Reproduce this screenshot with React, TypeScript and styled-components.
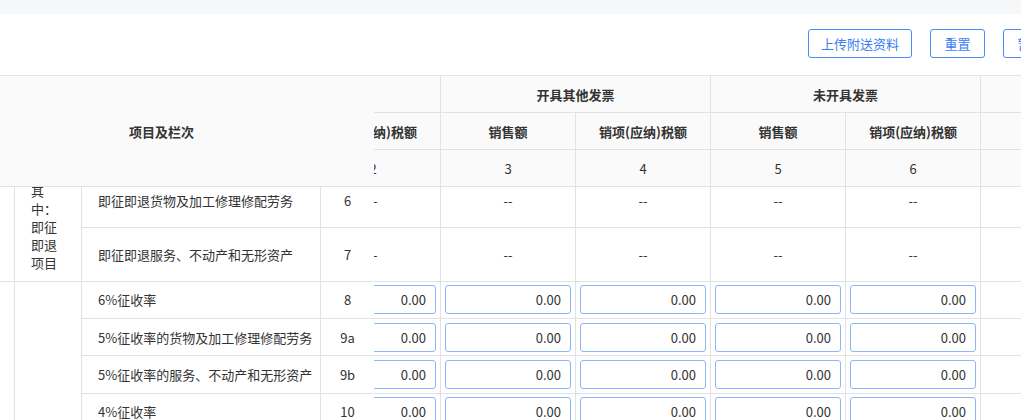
import React from 'react';
import styled, { createGlobalStyle } from 'styled-components';

const GlobalStyle = createGlobalStyle`
  html, body {
    margin: 0;
    padding: 0;
    background: #fff;
  }
  body {
    overflow: hidden;
    font-family: "Noto Sans CJK SC", "Noto Sans", sans-serif;
    font-size: 13px;
    color: #333;
  }
  * {
    box-sizing: border-box;
  }
`;

// the window is narrower than the form, and is scrolled a bit to the right
const PAGE_SCROLL_X = 52;
// the table body is scrolled sideways and down under its fixed header / fixed columns
const TABLE_SCROLL_X = 204;
const TABLE_SCROLL_Y = 201;

const FIXED_COLS = [66, 67, 239, 54];
const FIXED_WIDTH = FIXED_COLS.reduce((a, b) => a + b, 0);
const DATA_COL = 135;

type SubCol = { title: string; no: string };
type Group = { title: string; cols: SubCol[]; locked?: boolean };

const GROUPS: Group[] = [
  { title: '开具增值税专用发票', cols: [{ title: '销售额', no: '1' }, { title: '销项(应纳)税额', no: '2' }] },
  { title: '开具其他发票', cols: [{ title: '销售额', no: '3' }, { title: '销项(应纳)税额', no: '4' }] },
  { title: '未开具发票', cols: [{ title: '销售额', no: '5' }, { title: '销项(应纳)税额', no: '6' }] },
  {
    title: '纳税检查调整',
    cols: [{ title: '销售额', no: '7' }, { title: '销项(应纳)税额', no: '8' }],
    locked: true,
  },
];
const DATA_COLS = GROUPS.flatMap((g) => g.cols.map((c) => ({ ...c, locked: !!g.locked })));

type Line = { no: string; name: string; dash?: boolean; tall?: boolean };
type Part = { label: string; lines: Line[] };
type Section = { title: string; parts: Part[] };

const SECTIONS: Section[] = [
  {
    title: '一、一般计税方法计税',
    parts: [
      {
        label: '全部征税项目',
        lines: [
          { no: '1', name: '13%税率的货物及加工修理修配劳务' },
          { no: '2', name: '13%税率的服务、不动产和无形资产' },
          { no: '3', name: '9%税率的货物及加工修理修配劳务' },
          { no: '4', name: '9%税率的服务、不动产和无形资产' },
          { no: '5', name: '6%税率' },
        ],
      },
      {
        label: '其中：即征即退项目',
        lines: [
          { no: '6', name: '即征即退货物及加工修理修配劳务', dash: true, tall: true },
          { no: '7', name: '即征即退服务、不动产和无形资产', dash: true, tall: true },
        ],
      },
    ],
  },
  {
    title: '二、简易计税方法计税',
    parts: [
      {
        label: '全部征税项目',
        lines: [
          { no: '8', name: '6%征收率' },
          { no: '9a', name: '5%征收率的货物及加工修理修配劳务' },
          { no: '9b', name: '5%征收率的服务、不动产和无形资产' },
          { no: '10', name: '4%征收率' },
          { no: '11', name: '3%征收率的货物及加工修理修配劳务' },
          { no: '12', name: '3%征收率的服务、不动产和无形资产' },
          { no: '13a', name: '预征率 %' },
          { no: '13b', name: '预征率 %' },
          { no: '13c', name: '预征率 %' },
        ],
      },
      {
        label: '其中：即征即退项目',
        lines: [
          { no: '14', name: '即征即退货物及加工修理修配劳务', dash: true, tall: true },
          { no: '15', name: '即征即退服务、不动产和无形资产', dash: true, tall: true },
        ],
      },
    ],
  },
];

const Screen = styled.div`
  width: 100vw;
  height: 420px;
  overflow: hidden;
  padding-top: 14px;
  background: #f5f7f9;
`;

const Page = styled.div<{ $scroll: number }>`
  width: 1198px;
  height: 406px;
  margin-left: ${(p) => -p.$scroll}px;
  background: #fff;
  display: flex;
  flex-direction: column;
`;

const Toolbar = styled.div`
  height: 61px;
  flex: none;
  display: flex;
  justify-content: flex-end;
  align-items: flex-start;
  gap: 18px;
  padding: 15px 15px 0 0;
`;

const Button = styled.button`
  height: 29px;
  min-width: 55px;
  padding: 0 12px;
  border: 1px solid #4d8cf5;
  border-radius: 3px;
  background: #fff;
  color: #3b7cf2;
  font-family: inherit;
  font-size: 13px;
  cursor: pointer;
`;

const TableBox = styled.div`
  position: relative;
  flex: 1;
  overflow: hidden;
`;

const FixedLayer = styled.div`
  position: absolute;
  top: 0;
  left: 0;
  bottom: 0;
  width: ${FIXED_WIDTH}px;
  z-index: 2;
  background: #fff;
`;

const HeadWrap = styled.div`
  overflow: hidden;
`;

const BodyWrap = styled.div`
  overflow: hidden;
  height: 240px;
`;

const Grid = styled.table<{ $width: number; $dx?: number; $dy?: number }>`
  table-layout: fixed;
  border-collapse: collapse;
  width: ${(p) => p.$width}px;
  margin-left: ${(p) => -(p.$dx ?? 0)}px;
  margin-top: ${(p) => -(p.$dy ?? 0)}px;
`;

const Col = styled.col<{ $w: number }>`
  width: ${(p) => p.$w}px;
`;

const HeadRow = styled.tr`
  height: 37px;
`;

const HeadCell = styled.th<{ $light?: boolean }>`
  padding: 0 8px;
  background: #fafafa;
  border: 1px solid #e2e2e2;
  font-weight: ${(p) => (p.$light ? 400 : 700)};
  font-size: 13px;
  color: #333;
  text-align: center;
  white-space: nowrap;
`;

const BodyRow = styled.tr<{ $tall?: boolean }>`
  height: ${(p) => (p.$tall ? 54 : 37.33)}px;
`;

const Cell = styled.td`
  border: 1px solid #e2e2e2;
  background: #fff;
  padding: 0;
  font-size: 13px;
  color: #333;
`;

const SectionCell = styled(Cell)`
  padding: 0 8px;
  text-align: center;
  line-height: 18px;
`;

const PartCell = styled(Cell)`
  padding: 0 16px;
  text-align: left;
  line-height: 18px;
  word-break: break-all;
`;

const NameCell = styled(Cell)`
  padding: 0 16px;
  text-align: left;
  white-space: nowrap;
`;

const NoCell = styled(Cell)`
  text-align: center;
`;

const DashCell = styled(Cell)`
  text-align: center;
`;

const InputCell = styled(Cell)`
  padding: 0 4px;
`;

const Amount = styled.input`
  display: block;
  width: 100%;
  height: 29px;
  padding: 0 9px;
  border: 1px solid #8db7f8;
  border-radius: 3px;
  background: #fff;
  text-align: right;
  font-family: inherit;
  font-size: 13px;
  color: #333;
  outline: none;
`;

const allLines = SECTIONS.flatMap((s) => s.parts.flatMap((p) => p.lines));

function DataCols() {
  return (
    <colgroup>
      <Col $w={FIXED_WIDTH} />
      {DATA_COLS.map((c) => (
        <Col key={c.no} $w={DATA_COL} />
      ))}
    </colgroup>
  );
}

function FixedCols() {
  return (
    <colgroup>
      {FIXED_COLS.map((w, i) => (
        <Col key={i} $w={w} />
      ))}
    </colgroup>
  );
}

function ScrollPart() {
  const width = FIXED_WIDTH + DATA_COLS.length * DATA_COL;
  return (
    <>
      <HeadWrap>
        <Grid $width={width} $dx={TABLE_SCROLL_X}>
          <DataCols />
          <thead>
            <HeadRow>
              <HeadCell rowSpan={3} />
              {GROUPS.map((g) => (
                <HeadCell key={g.title} colSpan={g.cols.length}>
                  {g.title}
                </HeadCell>
              ))}
            </HeadRow>
            <HeadRow>
              {DATA_COLS.map((c) => (
                <HeadCell key={c.no}>{c.title}</HeadCell>
              ))}
            </HeadRow>
            <HeadRow>
              {DATA_COLS.map((c) => (
                <HeadCell key={c.no} $light>
                  {c.no}
                </HeadCell>
              ))}
            </HeadRow>
          </thead>
        </Grid>
      </HeadWrap>
      <BodyWrap>
        <Grid $width={width} $dx={TABLE_SCROLL_X} $dy={TABLE_SCROLL_Y}>
          <DataCols />
          <tbody>
            {allLines.map((line) => (
              <BodyRow key={line.no} $tall={line.tall}>
                <Cell />
                {DATA_COLS.map((c) =>
                  line.dash || c.locked ? (
                    <DashCell key={c.no}>--</DashCell>
                  ) : (
                    <InputCell key={c.no}>
                      <Amount readOnly value="0.00" />
                    </InputCell>
                  )
                )}
              </BodyRow>
            ))}
          </tbody>
        </Grid>
      </BodyWrap>
    </>
  );
}

function FixedPart() {
  return (
    <FixedLayer>
      <HeadWrap>
        <Grid $width={FIXED_WIDTH}>
          <FixedCols />
          <thead>
            <HeadRow>
              <HeadCell colSpan={4} rowSpan={3}>
                项目及栏次
              </HeadCell>
            </HeadRow>
            <HeadRow />
            <HeadRow />
          </thead>
        </Grid>
      </HeadWrap>
      <BodyWrap>
        <Grid $width={FIXED_WIDTH} $dy={TABLE_SCROLL_Y}>
          <FixedCols />
          <tbody>
            {SECTIONS.map((section) => {
              const sectionRows = section.parts.reduce((n, p) => n + p.lines.length, 0);
              return section.parts.map((part, pi) =>
                part.lines.map((line, li) => (
                  <BodyRow key={line.no} $tall={line.tall}>
                    {pi === 0 && li === 0 && (
                      <SectionCell rowSpan={sectionRows}>{section.title}</SectionCell>
                    )}
                    {li === 0 && <PartCell rowSpan={part.lines.length}>{part.label}</PartCell>}
                    <NameCell>{line.name}</NameCell>
                    <NoCell>{line.no}</NoCell>
                  </BodyRow>
                ))
              );
            })}
          </tbody>
        </Grid>
      </BodyWrap>
    </FixedLayer>
  );
}

export default function App() {
  return (
    <>
      <GlobalStyle />
      <Screen>
        <Page $scroll={PAGE_SCROLL_X}>
          <Toolbar>
            <Button>上传附送资料</Button>
            <Button>重置</Button>
            <Button>暂存</Button>
            <Button>申报</Button>
          </Toolbar>
          <TableBox>
            <ScrollPart />
            <FixedPart />
          </TableBox>
        </Page>
      </Screen>
    </>
  );
}
